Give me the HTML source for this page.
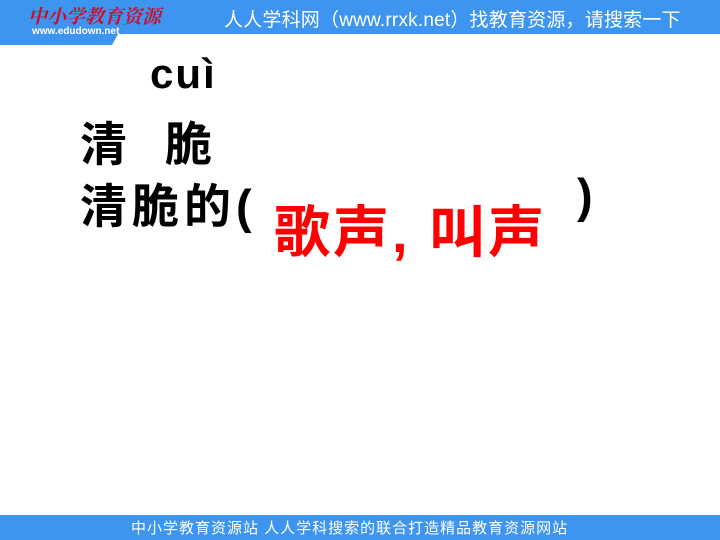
<!DOCTYPE html>
<html><head><meta charset="utf-8"><style>
body{margin:0;width:720px;height:540px;position:relative;background:#fff;overflow:hidden;font-family:"Liberation Sans","Noto Sans CJK SC",sans-serif}
.a{position:absolute;white-space:nowrap}
.b{color:#000;font-weight:bold}
</style></head><body>
<div class="a" style="left:0;top:0;width:720px;height:34px;background:#3d95f0"></div>
<svg class="a" style="left:0;top:0" width="130" height="46"><polygon points="0,0 130,0 130,34 118,34 112,45 0,45" fill="#3d95f0"/></svg>
<div class="a" style="left:28px;top:2px;font-size:19px;color:#c8102e;font-weight:bold;font-family:'Noto Serif CJK SC',serif;font-style:italic">中小学教育资源</div>
<div class="a" style="left:32px;top:26px;font-size:10px;color:#fff;font-weight:bold">www.edudown.net</div>
<div class="a" style="left:224px;top:5px;font-size:19px;color:#fff;letter-spacing:0.2px">人人学科网（www.rrxk.net）找教育资源，请搜索一下</div>
<div class="a b" style="left:150px;top:50px;font-size:42px;letter-spacing:2px">cuì</div>
<div class="a b" style="left:80px;top:106px;font-size:47px">清</div>
<div class="a b" style="left:165px;top:106px;font-size:47px">脆</div>
<div class="a b" style="left:80px;top:168px;font-size:47px;letter-spacing:5px">清脆的(</div>
<div class="a b" style="left:577px;top:168px;font-size:47px">)</div>
<div class="a" style="left:274px;top:188px;font-size:56px;font-weight:bold;color:#f00;letter-spacing:3px">歌声,&nbsp;叫声</div>
<div class="a" style="left:0;top:515px;width:720px;height:25px;background:#3d95f0"></div>
<div class="a" style="left:131px;top:517px;font-size:15px;color:#fff;letter-spacing:1px">中小学教育资源站 人人学科搜索的联合打造精品教育资源网站</div>
</body></html>
